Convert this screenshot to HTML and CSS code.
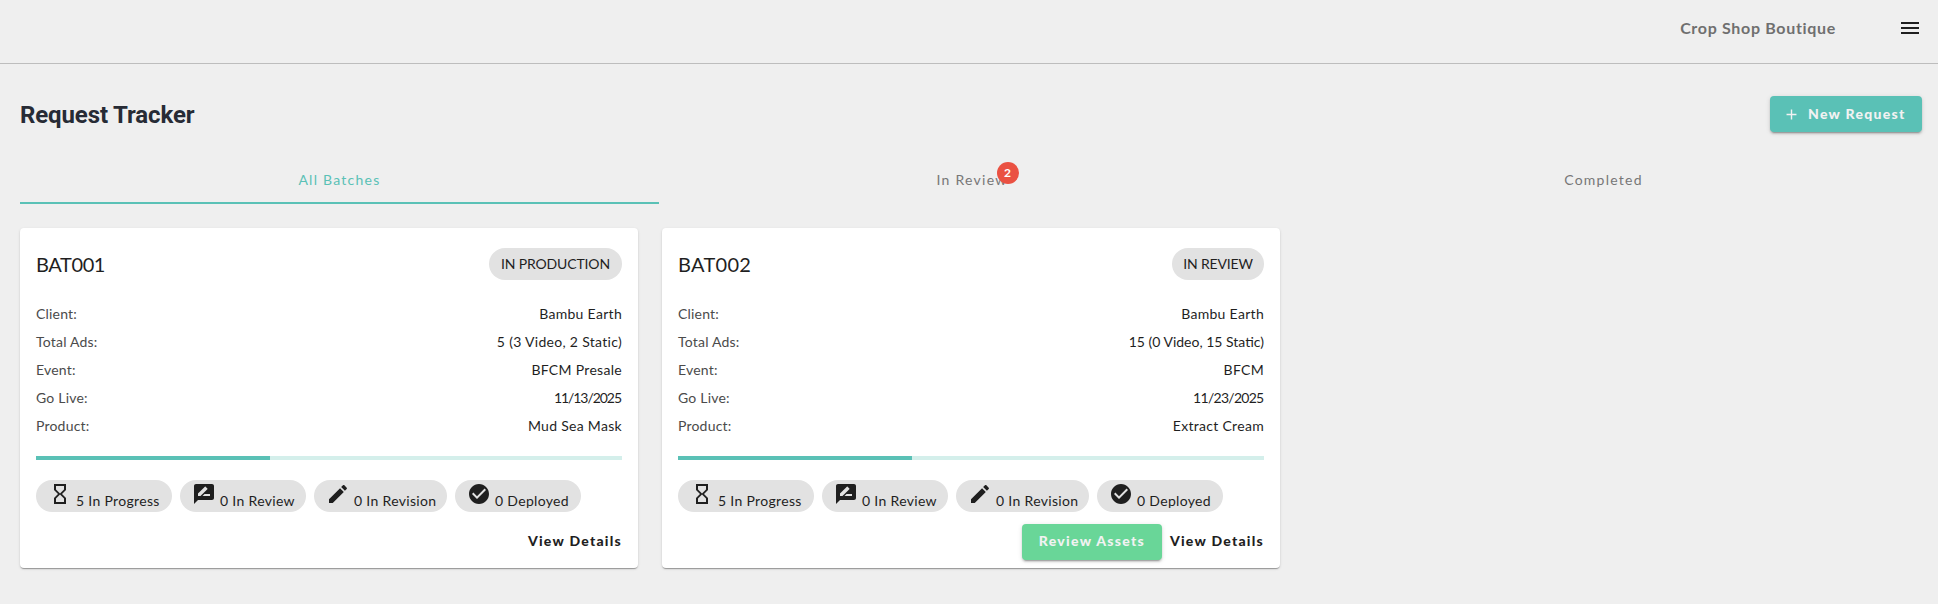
FILE: index.html
```
<!DOCTYPE html>
<html lang="en">
<head>
<meta charset="utf-8">
<title>Request Tracker</title>
<link rel="stylesheet" href="styles.css">
</head>
<body>
<svg class="sprite" aria-hidden="true">
  <symbol id="hourglass" viewBox="0 0 24 24"><path d="M6 2v6h.01L6 8.01 10 12l-4 4 .01.01H6V22h12v-5.99h-.01L18 16l-4-4 4-3.99-.01-.01H18V2H6zm10 14.5V20H8v-3.5l4-4 4 4zm-4-5l-4-4V4h8v3.500l-4 4z"/></symbol>
  <symbol id="review" viewBox="0 0 24 24"><path d="M20 2H4c-1.100 0-1.990.9-1.990 2L2 22l4-4h14c1.100 0 2-.9 2-2V4c0-1.100-.9-2-2-2zM6 14v-2.470l6.880-6.880c.2-.2.510-.2.710 0l1.770 1.770c.2.2.2.510 0 .710L8.470 14H6zm12 0h-7.500l2-2H18v2z"/></symbol>
  <symbol id="edit" viewBox="0 0 24 24"><path d="M3 17.250V21h3.750L17.810 9.940l-3.750-3.750L3 17.250zM20.710 7.040c.39-.39.39-1.020 0-1.410l-2.340-2.340c-.39-.39-1.020-.39-1.410 0l-1.830 1.830 3.750 3.750 1.830-1.830z"/></symbol>
  <symbol id="check" viewBox="0 0 24 24"><path d="M12 2C6.480 2 2 6.480 2 12s4.480 10 10 10 10-4.480 10-10S17.520 2 12 2zm-2 15l-5-5 1.410-1.410L10 14.170l7.590-7.590L19 8l-9 9z"/></symbol>
  <symbol id="menu" viewBox="0 0 24 24"><path d="M3 18h18v-2H3v2zm0-5h18v-2H3v2zm0-7v2h18V6H3z"/></symbol>
  <symbol id="plus" viewBox="0 0 24 24"><path d="M19 13h-6v6h-2v-6H5v-2h6V5h2v6h6v2z"/></symbol>
</svg>

<header class="topbar">
  <span class="account">Crop Shop Boutique</span>
  <svg class="icon"><use href="#menu"/></svg>
</header>

<main class="page">
  <div class="page-head">
    <h1 class="page-title">Request Tracker</h1>
    <button class="btn btn-new"><svg class="icon-plus"><use href="#plus"/></svg><span>New Request</span></button>
  </div>

  <nav class="tabs">
    <a class="tab tab-all active">All Batches</a>
    <a class="tab tab-review"><span class="badge-host">In Review<span class="badge">2</span></span></a>
    <a class="tab tab-done">Completed</a>
  </nav>

  <div class="cards">
    <article class="card">
      <div class="card-head"><h2 class="card-title tight">BAT001</h2><span class="chip status status-production">IN PRODUCTION</span></div>
      <dl class="details">
        <div class="row"><dt>Client:</dt><dd>Bambu Earth</dd></div>
        <div class="row"><dt>Total Ads:</dt><dd>5 (3 Video, 2 Static)</dd></div>
        <div class="row"><dt>Event:</dt><dd>BFCM Presale</dd></div>
        <div class="row"><dt>Go Live:</dt><dd class="date date-narrow">11/13/2025</dd></div>
        <div class="row"><dt>Product:</dt><dd>Mud Sea Mask</dd></div>
      </dl>
      <div class="progress"><div class="progress-fill" style="width:40%"></div></div>
      <div class="chips">
        <span class="chip count c-progress"><svg class="icon"><use href="#hourglass"/></svg><span>5 In Progress</span></span>
        <span class="chip count c-review"><svg class="icon"><use href="#review"/></svg><span>0 In Review</span></span>
        <span class="chip count c-revision"><svg class="icon"><use href="#edit"/></svg><span>0 In Revision</span></span>
        <span class="chip count c-deployed"><svg class="icon"><use href="#check"/></svg><span>0 Deployed</span></span>
      </div>
      <div class="actions"><a class="link">View Details</a></div>
    </article>

    <article class="card">
      <div class="card-head"><h2 class="card-title">BAT002</h2><span class="chip status status-review">IN REVIEW</span></div>
      <dl class="details">
        <div class="row"><dt>Client:</dt><dd>Bambu Earth</dd></div>
        <div class="row"><dt>Total Ads:</dt><dd class="long">15 (0 Video, 15 Static)</dd></div>
        <div class="row"><dt>Event:</dt><dd>BFCM</dd></div>
        <div class="row"><dt>Go Live:</dt><dd class="date">11/23/2025</dd></div>
        <div class="row"><dt>Product:</dt><dd>Extract Cream</dd></div>
      </dl>
      <div class="progress"><div class="progress-fill" style="width:40%"></div></div>
      <div class="chips">
        <span class="chip count c-progress"><svg class="icon"><use href="#hourglass"/></svg><span>5 In Progress</span></span>
        <span class="chip count c-review"><svg class="icon"><use href="#review"/></svg><span>0 In Review</span></span>
        <span class="chip count c-revision"><svg class="icon"><use href="#edit"/></svg><span>0 In Revision</span></span>
        <span class="chip count c-deployed"><svg class="icon"><use href="#check"/></svg><span>0 Deployed</span></span>
      </div>
      <div class="actions"><button class="btn btn-review">Review Assets</button><a class="link">View Details</a></div>
    </article>
  </div>
</main>
</body>
</html>
```
FILE: styles.css
```
* { box-sizing: border-box; }
body {
  margin: 0;
  min-height: 604px;
  background: #efefef;
  color: #1f1f1f;
  font-family: Lato, "Open Sans", sans-serif;
  font-size: 14px;
}
h1, h2, dl, dd { margin: 0; }
.sprite { display: none; }
.icon { width: 24px; height: 24px; fill: #1f1f1f; flex: none; }

.topbar {
  height: 64px;
  padding: 16px 16px 0 0;
  border-bottom: 1px solid #bdbdbd;
  display: flex;
  justify-content: flex-end;
  gap: 62px;
}
.account { font-size: 16px; line-height: 23px; font-weight: 700; letter-spacing: .68px; color: #6f6f6f; }

.page { padding: 32px 16px 0 20px; }
.page-head { display: flex; justify-content: space-between; height: 36px; }
.page-title {
  font-family: Roboto, sans-serif;
  font-size: 24px;
  line-height: 38px;
  font-weight: 700;
  letter-spacing: -.12px;
  color: #272b35;
}
.btn {
  height: 36px;
  padding: 0 16px;
  border: 0;
  border-radius: 4px;
  display: flex;
  align-items: center;
  justify-content: center;
  font: 900 14px/34px Lato, sans-serif;
  letter-spacing: 1.3px;
  color: #f2f2f2;
  white-space: nowrap;
  box-shadow: 0 3px 1px -2px rgba(0,0,0,.2), 0 2px 2px rgba(0,0,0,.14), 0 1px 5px rgba(0,0,0,.12);
}
.btn span { line-height: 34px; padding-bottom: 1px; }
.btn-new { width: 152px; background: #5ac1b6; justify-content: flex-start; padding-left: 13px; }
.icon-plus { width: 17px; height: 17px; fill: #f2f2f2; margin-right: 8px; }
.btn-review { width: 140px; background: #69d698; padding-bottom: 2px; }

.tabs { display: flex; height: 48px; margin-top: 24px; }
.tab {
  display: flex;
  justify-content: center;
  line-height: 48px;
  letter-spacing: 1.25px;
  color: #777;
}
.tab-all { flex: 639 1 0; }
.tab-review { flex: 626 1 0; }
.tab-done { flex: 637 1 0; }
.tab.active { color: #5ac1b6; border-bottom: 2px solid #5ac1b6; }
.badge-host { position: relative; }
.badge {
  position: absolute;
  top: 6px;
  right: -12px;
  width: 22px;
  height: 22px;
  border-radius: 50%;
  background: #ea5142;
  color: #fff;
  font-size: 12px;
  font-weight: 700;
  line-height: 21px;
  text-align: center;
  padding-right: 2px;
  letter-spacing: 0;
}

.cards { display: grid; grid-template-columns: repeat(3, 1fr); gap: 24px; margin-top: 24px; }
.card {
  height: 340px;
  padding: 20px 16px 8px;
  border-radius: 4px;
  background: #fff;
  box-shadow: 0 2px 1px -1px rgba(0,0,0,.2), 0 1px 1px rgba(0,0,0,.14), 0 1px 3px rgba(0,0,0,.12);
}
.card-head { display: flex; justify-content: space-between; height: 32px; }
.card-title { font-size: 20px; line-height: 32px; font-weight: 400; letter-spacing: .3px; }
.card-title.tight { letter-spacing: -.4px; }
.chip { height: 32px; border-radius: 16px; background: #e2e2e2; white-space: nowrap; }
.status { line-height: 32px; text-align: center; letter-spacing: -.15px; }
.status-production { width: 133px; }
.status-review { width: 92px; }

.details { margin-top: 20px; }
.row { display: flex; justify-content: space-between; height: 28px; line-height: 28px; letter-spacing: .3px; }
.row dt { color: #4b4b4b; letter-spacing: .2px; }
.row .date { letter-spacing: -.72px; margin-right: .5px; }
.row .date-narrow { letter-spacing: -1.05px; margin-right: 1px; }
.row .long { letter-spacing: 0; }

.progress { height: 4px; margin-top: 16px; background: #d4efeb; }
.progress-fill { height: 4px; background: #5ac1b6; }

.chips { display: flex; gap: 8px; margin-top: 20px; }
.count { display: flex; gap: 4px; padding: 2px 12px 0; letter-spacing: .32px; }
.count span { line-height: 20px; padding-top: 9px; }
.c-progress { width: 136px; }
.c-review { width: 126px; }
.c-revision { width: 133px; }
.c-deployed { width: 126px; }

.actions { display: flex; justify-content: flex-end; gap: 8px; height: 36px; margin-top: 12px; }
.link { font-weight: 900; line-height: 34px; letter-spacing: 1.25px; }
```
